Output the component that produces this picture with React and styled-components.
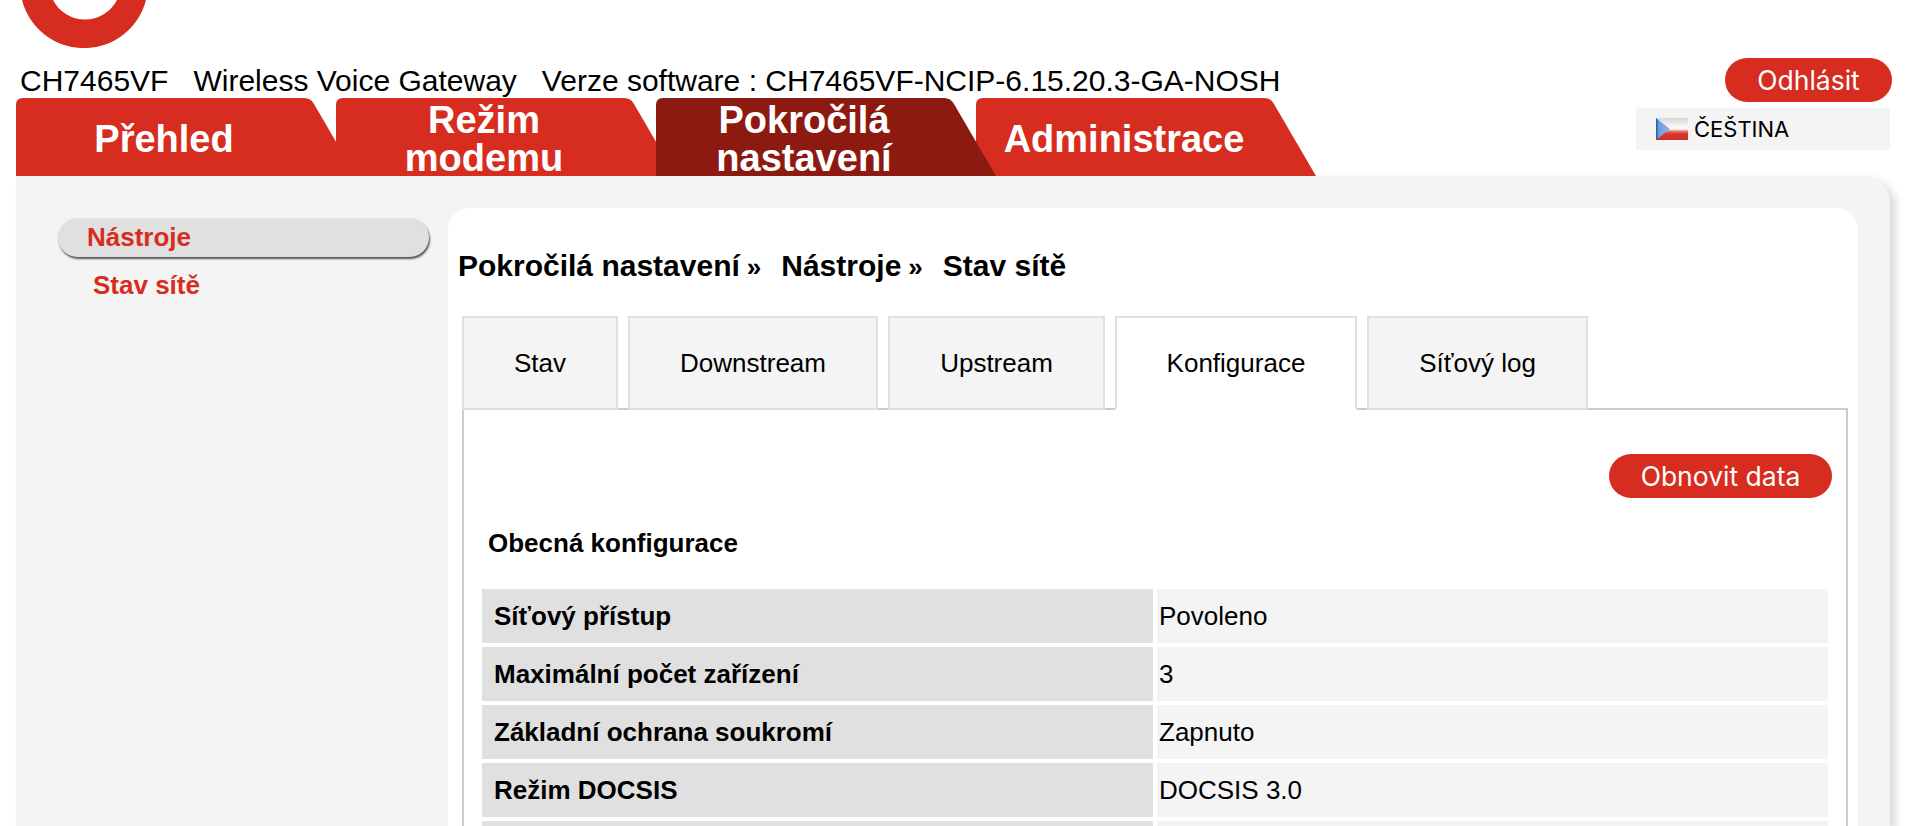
import React from 'react'
import styled, { createGlobalStyle } from 'styled-components'

const RED = '#d62d20'
const DARK_RED = '#8c1a10'
const PANEL_GREY = '#f4f4f4'
const HELVETICA = '"Liberation Sans", Arial, sans-serif'

const GlobalStyle = createGlobalStyle`
  html, body {
    margin: 0;
    height: 826px;
    overflow: hidden;
    background: #fff;
    color: #000;
    font-family: ${HELVETICA};
  }
`

const Header = styled.header`
  display: flex;
  justify-content: space-between;
  height: 176px;
`

const Brand = styled.div`
  padding-left: 16px;
`

const LogoMark = styled.svg`
  display: block;
  width: 130px;
  height: 48px;
  margin-left: 4px;
`

const ModelLine = styled.div`
  height: 50px;
  padding: 19px 0 0 4px;
  box-sizing: border-box;
  font-size: 30px;
  line-height: 28px;
  white-space: pre;
`

const MainTabs = styled.nav`
  display: flex;
`

const MainTab = styled.a`
  position: relative;
  z-index: ${p => (p.$active ? 2 : 1)};
  display: flex;
  align-items: center;
  justify-content: center;
  width: 340px;
  height: 78px;
  margin-right: -20px;
  padding: 4px 44px 0 0;
  box-sizing: border-box;
  clip-path: path('M0 78 V7 Q0 0 7 0 H288 Q295 0 298 6 L340 78 Z');
  background: ${p => (p.$active ? DARK_RED : RED)};
  color: #fff;
  font-size: 38px;
  font-weight: 700;
  line-height: 38px;
  text-align: center;
`

const Account = styled.div`
  display: flex;
  flex-direction: column;
  align-items: flex-end;
  gap: 6px;
  padding: 58px 28px 0 0;
`

const PillButton = styled.button`
  height: 44px;
  width: ${p => p.$width}px;
  padding: 0;
  border: 0;
  border-radius: 22px;
  background: ${RED};
  color: #fff;
  font-family: Inter, sans-serif;
  font-size: 26.5px;
`

const LanguageBox = styled.div`
  display: flex;
  align-items: center;
  gap: 6px;
  width: 254px;
  height: 42px;
  margin-right: 2px;
  padding-left: 20px;
  box-sizing: border-box;
  background: ${PANEL_GREY};
  font-family: Inter, sans-serif;
  font-size: 22px;
`

const Flag = styled.svg`
  width: 32px;
  height: 22px;
`

const Panel = styled.main`
  display: flex;
  width: 1874px;
  height: 650px;
  margin-left: 16px;
  border-radius: 0 26px 0 0;
  background: ${PANEL_GREY};
  box-shadow: 6px 4px 8px rgba(0, 0, 0, 0.14);
`

const Sidebar = styled.aside`
  width: 432px;
  flex: none;
  padding: 42px 19px 0 42px;
  box-sizing: border-box;
`

const SideHeading = styled.div`
  height: 39px;
  padding-left: 29px;
  border-radius: 20px;
  background: #e0e0e0;
  box-shadow: 1px 2px 2px #555;
  color: ${RED};
  font-size: 26px;
  font-weight: 700;
  line-height: 38px;
`

const SideLink = styled.a`
  display: block;
  margin: 13px 0 0 35px;
  color: ${RED};
  font-size: 26px;
  font-weight: 700;
  line-height: 30px;
`

const Content = styled.section`
  width: 1410px;
  flex: none;
  margin-top: 32px;
  padding: 0 10px 0 14px;
  box-sizing: border-box;
  border-radius: 22px 22px 0 0;
  background: #fff;
`

const Breadcrumb = styled.h1`
  display: flex;
  height: 108px;
  margin: 0 0 0 -4px;
  padding-top: 41px;
  box-sizing: border-box;
  font-size: 30px;
  font-weight: 700;
  line-height: 34px;
`

const Crumb = styled.span`
  margin-right: ${p => p.$gap}px;
`

const Chevron = styled.span`
  margin-left: 7px;
  font-size: 26px;
`

const SubTabs = styled.div`
  position: relative;
  z-index: 1;
  display: flex;
  gap: 10px;
`

const SubTab = styled.a`
  display: flex;
  align-items: center;
  justify-content: center;
  width: ${p => p.$width}px;
  height: 94px;
  box-sizing: border-box;
  border: 2px solid #e0e0e0;
  border-bottom-color: ${p => (p.$active ? '#fff' : '#e0e0e0')};
  background: ${p => (p.$active ? '#fff' : PANEL_GREY)};
  font-size: 26px;
`

const TabBody = styled.div`
  height: 418px;
  margin-top: -2px;
  padding: 44px 14px 0 18px;
  box-sizing: border-box;
  border: 2px solid #ccc;
  border-bottom: 0;
  overflow: hidden;
`

const Toolbar = styled.div`
  display: flex;
  justify-content: flex-end;
`

const SectionTitle = styled.h2`
  margin: 30px 0 0 6px;
  font-size: 26px;
  font-weight: 700;
  line-height: 30px;
`

const InfoGrid = styled.div`
  display: grid;
  grid-template-columns: 671px 671px;
  grid-auto-rows: 54px;
  gap: 4px;
  margin-top: 31px;
  font-size: 26px;
  line-height: 54px;
`

const InfoLabel = styled.div`
  padding-left: 12px;
  background: #e0e0e0;
  font-weight: 700;
`

const InfoValue = styled.div`
  padding-left: 2px;
  background: ${PANEL_GREY};
`

const subTabs = [
  { label: 'Stav', width: 156 },
  { label: 'Downstream', width: 250 },
  { label: 'Upstream', width: 217 },
  { label: 'Konfigurace', width: 242, active: true },
  { label: 'Síťový log', width: 221 }
]

const rows = [
  ['Síťový přístup', 'Povoleno'],
  ['Maximální počet zařízení', '3'],
  ['Základní ochrana soukromí', 'Zapnuto'],
  ['Režim DOCSIS', 'DOCSIS 3.0'],
  ['\u00a0', '\u00a0']
]

const Logo = () => (
  <LogoMark viewBox="0 0 130 48">
    <path
      fill={RED}
      d="M2 0 A64 64 0 0 0 126 0 H97 A36 36 0 0 1 33 0 Z"
    />
  </LogoMark>
)

const CzechFlag = () => (
  <Flag viewBox="0 0 32 22">
    <defs>
      <linearGradient id="flagWhite" x1="0" y1="0" x2="0" y2="1">
        <stop offset="0" stopColor="#d8d8d8" />
        <stop offset="0.5" stopColor="#ffffff" />
        <stop offset="0.6" stopColor="#e87a72" />
        <stop offset="0.72" stopColor="#d8352c" />
        <stop offset="1" stopColor="#c8302a" />
      </linearGradient>
      <linearGradient id="flagBlue" x1="0" y1="0" x2="1" y2="0">
        <stop offset="0" stopColor="#1c4fa8" />
        <stop offset="0.2" stopColor="#6f9fdc" />
        <stop offset="1" stopColor="#8fb4e4" />
      </linearGradient>
    </defs>
    <rect width="32" height="22" fill="url(#flagWhite)" />
    <path d="M0 0 L14 11 L0 22 Z" fill="url(#flagBlue)" />
  </Flag>
)

export default function App () {
  return (
    <>
      <GlobalStyle />
      <Header>
        <Brand>
          <Logo />
          <ModelLine>CH7465VF   Wireless Voice Gateway   Verze software : CH7465VF-NCIP-6.15.20.3-GA-NOSH</ModelLine>
          <MainTabs>
            <MainTab>Přehled</MainTab>
            <MainTab>Režim<br />modemu</MainTab>
            <MainTab $active>Pokročilá<br />nastavení</MainTab>
            <MainTab>Administrace</MainTab>
          </MainTabs>
        </Brand>
        <Account>
          <PillButton $width={167}>Odhlásit</PillButton>
          <LanguageBox><CzechFlag />ČEŠTINA</LanguageBox>
        </Account>
      </Header>
      <Panel>
        <Sidebar>
          <SideHeading>Nástroje</SideHeading>
          <SideLink>Stav sítě</SideLink>
        </Sidebar>
        <Content>
          <Breadcrumb>
            <Crumb $gap={20}>Pokročilá nastavení<Chevron>»</Chevron></Crumb>
            <Crumb $gap={20}>Nástroje<Chevron>»</Chevron></Crumb>
            <Crumb $gap={0}>Stav sítě</Crumb>
          </Breadcrumb>
          <SubTabs>
            {subTabs.map(tab => (
              <SubTab key={tab.label} $width={tab.width} $active={tab.active}>{tab.label}</SubTab>
            ))}
          </SubTabs>
          <TabBody>
            <Toolbar>
              <PillButton $width={223}>Obnovit data</PillButton>
            </Toolbar>
            <SectionTitle>Obecná konfigurace</SectionTitle>
            <InfoGrid>
              {rows.map(([label, value], i) => (
                <React.Fragment key={i}>
                  <InfoLabel>{label}</InfoLabel>
                  <InfoValue>{value}</InfoValue>
                </React.Fragment>
              ))}
            </InfoGrid>
          </TabBody>
        </Content>
      </Panel>
    </>
  )
}
